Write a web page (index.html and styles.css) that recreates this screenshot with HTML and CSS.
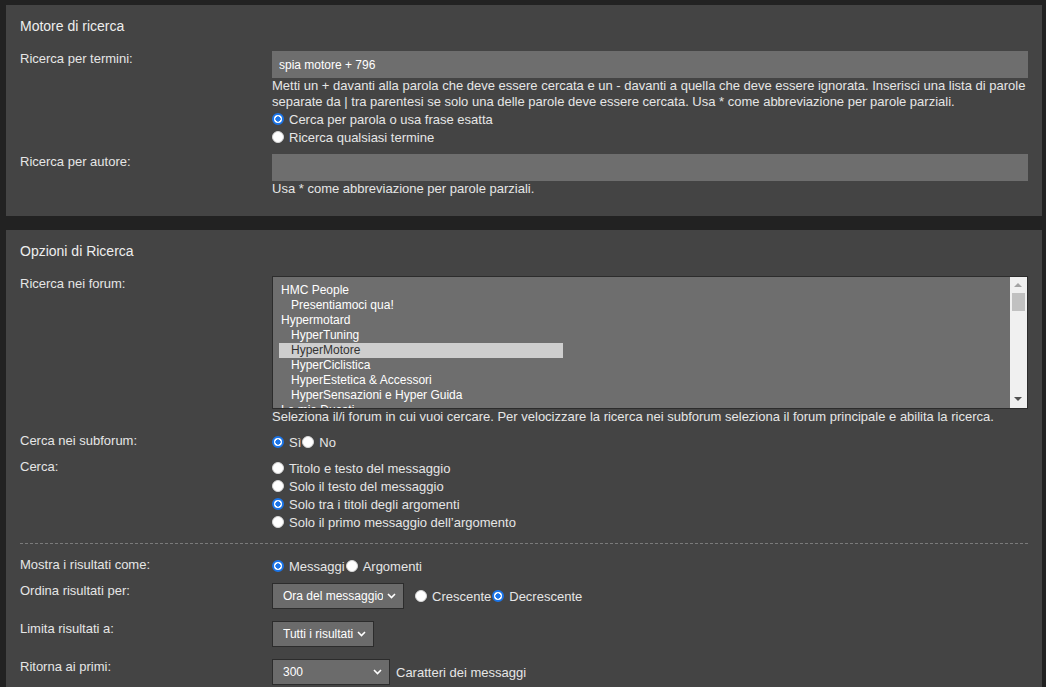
FILE: index.html
```html
<!DOCTYPE html>
<html lang="it">
<head>
    <meta charset="UTF-8">
    <meta name="viewport" content="width=device-width, initial-scale=1.0">
    <title>Cerca</title>
    <link rel="stylesheet" href="styles.css">
</head>
<body>
<div class="page">
    <form class="search">
        <section class="panel">
            <h3 class="panel-title">Motore di ricerca</h3>
            <div class="panel-body">
                <div class="row">
                    <label class="row-label" for="keywords">Ricerca per termini:</label>
                    <div class="row-field">
                        <input type="text" id="keywords" class="textbox" value="spia motore + 796">
                        <p class="explain">Metti un + davanti alla parola che deve essere cercata e un - davanti a quella che deve essere ignorata. Inserisci una lista di parole separate da | tra parentesi se solo una delle parole deve essere cercata. Usa * come abbreviazione per parole parziali.</p>
                        <label class="opt"><input type="radio" class="radio" name="terms" checked>Cerca per parola o usa frase esatta</label>
                        <label class="opt"><input type="radio" class="radio" name="terms">Ricerca qualsiasi termine</label>
                    </div>
                </div>
                <div class="row">
                    <label class="row-label" for="author">Ricerca per autore:</label>
                    <div class="row-field">
                        <input type="text" id="author" class="textbox" value="">
                        <p class="explain">Usa * come abbreviazione per parole parziali.</p>
                    </div>
                </div>
            </div>
        </section>

        <section class="panel">
            <h3 class="panel-title">Opzioni di Ricerca</h3>
            <div class="panel-body">
                <div class="row">
                    <label class="row-label">Ricerca nei forum:</label>
                    <div class="row-field">
                        <div class="forumlist" role="listbox">
                            <div class="forumlist-items">
                                <div class="fitem">HMC People</div>
                                <div class="fitem sub">Presentiamoci qua!</div>
                                <div class="fitem">Hypermotard</div>
                                <div class="fitem sub">HyperTuning</div>
                                <div class="fitem sub selected">HyperMotore</div>
                                <div class="fitem sub">HyperCiclistica</div>
                                <div class="fitem sub">HyperEstetica &amp; Accessori</div>
                                <div class="fitem sub">HyperSensazioni e Hyper Guida</div>
                                <div class="fitem">Le mie Ducati</div>
                                <div class="fitem sub">Monster</div>
                            </div>
                            <div class="scrollbar">
                                <span class="arrow up"></span>
                                <span class="thumb"></span>
                                <span class="arrow down"></span>
                            </div>
                        </div>
                        <p class="explain">Seleziona il/i forum in cui vuoi cercare. Per velocizzare la ricerca nei subforum seleziona il forum principale e abilita la ricerca.</p>
                    </div>
                </div>
                <div class="row">
                    <label class="row-label">Cerca nei subforum:</label>
                    <div class="row-field inline">
                        <label class="opt"><input type="radio" class="radio" name="subforum" checked>Sì</label>
                        <label class="opt"><input type="radio" class="radio" name="subforum">No</label>
                    </div>
                </div>
                <div class="row">
                    <label class="row-label">Cerca:</label>
                    <div class="row-field">
                        <label class="opt"><input type="radio" class="radio" name="fields">Titolo e testo del messaggio</label>
                        <label class="opt"><input type="radio" class="radio" name="fields">Solo il testo del messaggio</label>
                        <label class="opt"><input type="radio" class="radio" name="fields" checked>Solo tra i titoli degli argomenti</label>
                        <label class="opt"><input type="radio" class="radio" name="fields">Solo il primo messaggio dell’argomento</label>
                    </div>
                </div>

                <hr class="divider">

                <div class="row">
                    <label class="row-label">Mostra i risultati come:</label>
                    <div class="row-field inline">
                        <label class="opt"><input type="radio" class="radio" name="show" checked>Messaggi</label>
                        <label class="opt"><input type="radio" class="radio" name="show">Argomenti</label>
                    </div>
                </div>
                <div class="row row-select">
                    <label class="row-label" for="sortkey">Ordina risultati per:</label>
                    <div class="row-field inline">
                        <select id="sortkey" class="dropdown w-sort">
                            <option>Ora del messaggio</option>
                            <option>Autore</option>
                            <option>Titolo</option>
                        </select>
                        <label class="opt after-select"><input type="radio" class="radio" name="sortdir">Crescente</label>
                        <label class="opt"><input type="radio" class="radio" name="sortdir" checked>Decrescente</label>
                    </div>
                </div>
                <div class="row row-select">
                    <label class="row-label" for="days">Limita risultati a:</label>
                    <div class="row-field inline">
                        <select id="days" class="dropdown w-days">
                            <option>Tutti i risultati</option>
                            <option>1 giorno</option>
                            <option>7 giorni</option>
                        </select>
                    </div>
                </div>
                <div class="row row-select">
                    <label class="row-label" for="chars">Ritorna ai primi:</label>
                    <div class="row-field inline">
                        <select id="chars" class="dropdown w-chars">
                            <option>300</option>
                            <option>100</option>
                            <option>50</option>
                        </select>
                        <span class="after-text">Caratteri dei messaggi</span>
                    </div>
                </div>
            </div>
        </section>
    </form>
</div>
</body>
</html>
```

FILE: styles.css
```css
body {
    margin: 0;
    background-color: #222;
    color: #e6e6e6;
    font-family: "Liberation Sans", Arial, Helvetica, sans-serif;
    font-size: 13px;
}
.page {
    padding: 5px 4px 40px 6px;
}
.panel {
    background-color: #444;
    padding: 12px 14px 19px;
    margin-bottom: 14px;
}
.panel-title {
    margin: 0 0 16px;
    font-size: 14px;
    font-weight: normal;
    line-height: 18px;
    color: #eee;
}
.panel-body {
    display: flex;
    flex-direction: column;
    gap: 8px;
}
.row {
    display: flex;
}
.row-select {
    margin-bottom: 4px;
}
.row-label {
    width: 252px;
    flex: none;
    line-height: 16px;
}
.row-field {
    flex: 1;
    min-width: 0;
}
.row-field.inline {
    display: flex;
    align-items: center;
    min-height: 18px;
}
.textbox {
    display: block;
    width: 100%;
    height: 27px;
    box-sizing: border-box;
    border: none;
    padding: 0 7px;
    background-color: #6e6e6e;
    color: #fff;
    font-family: inherit;
    font-size: 12px;
}
.explain {
    margin: 0;
    line-height: 16px;
}
.opt {
    display: flex;
    align-items: center;
    gap: 5px;
    height: 18px;
}
.inline .opt {
    display: inline-flex;
    margin-right: 1px;
}
.radio {
    appearance: none;
    -webkit-appearance: none;
    width: 12px;
    height: 12px;
    margin: 0;
    flex: none;
    box-sizing: border-box;
    border-radius: 50%;
    border: 1px solid #d6d6d6;
    background-color: #fff;
}
.radio:checked {
    border: 2px solid #1a74e8;
    background: radial-gradient(circle, #1a74e8 0 2.4px, #fff 2.9px);
}

/* forum list box */
.forumlist {
    display: flex;
    height: 133px;
    box-sizing: border-box;
    border: 1px solid #2c2c2c;
    background-color: #6e6e6e;
    overflow: hidden;
}
.forumlist-items {
    flex: 1;
    padding: 6px 0 0 6px;
    overflow: hidden;
    font-size: 12px;
    line-height: 15px;
    color: #fff;
}
.fitem {
    width: 284px;
    padding-left: 2px;
    box-sizing: border-box;
    white-space: nowrap;
}
.fitem.sub {
    padding-left: 12px;
}
.fitem.selected {
    background-color: #cecece;
    color: #333;
}
.scrollbar {
    position: relative;
    width: 17px;
    flex: none;
    background-color: #f0f0f0;
}
.thumb {
    position: absolute;
    left: 2px;
    right: 2px;
    top: 16px;
    height: 18px;
    background-color: #c1c1c1;
}
.arrow {
    position: absolute;
    left: 4px;
    width: 0;
    height: 0;
    border-left: 4px solid transparent;
    border-right: 4px solid transparent;
}
.arrow.up {
    top: 6px;
    border-bottom: 4px solid #a3a3a3;
}
.arrow.down {
    bottom: 7px;
    border-top: 4px solid #505050;
}

.divider {
    border: none;
    border-top: 1px dashed #7a7a7a;
    margin: 4px 0 5px;
    height: 0;
}

.dropdown {
    appearance: none;
    -webkit-appearance: none;
    height: 26px;
    box-sizing: border-box;
    margin: 0;
    border: 1px solid #2c2c2c;
    border-radius: 0;
    padding: 0 20px 0 10px;
    background: #6b6b6b url("data:image/svg+xml,%3Csvg xmlns='http://www.w3.org/2000/svg' width='9' height='6'%3E%3Cpath d='M1 1l3.5 3.5L8 1' fill='none' stroke='%23fff' stroke-width='1.6'/%3E%3C/svg%3E") no-repeat right 7px center;
    color: #fff;
    font-family: inherit;
    font-size: 12px;
}
.w-sort { width: 132px; }
.w-days { width: 102px; }
.w-chars { width: 118px; }
.after-select {
    margin-left: 11px;
}
.after-text {
    margin-left: 6px;
}
```
